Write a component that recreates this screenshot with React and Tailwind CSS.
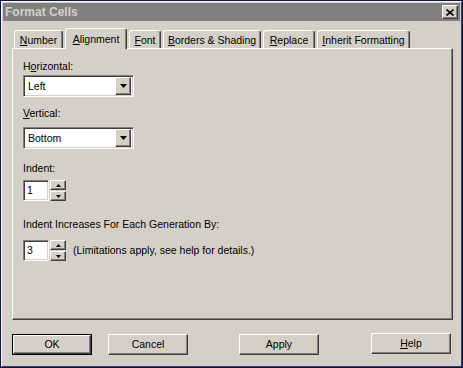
import React from 'react'

const raised = 'border border-t-white border-l-white border-r-[#404040] border-b-[#404040] shadow-[inset_-1px_-1px_#808080] bg-[#d4d0c8]'
const sunken = 'border border-t-[#808080] border-l-[#808080] border-r-white border-b-white shadow-[inset_1px_1px_#404040,inset_-1px_-1px_#d4d0c8] bg-white'

function U({ children }) {
  return <span className="underline underline-offset-[1px]">{children}</span>
}

function Tab({ w, selected, children }) {
  return (
    <div
      className={
        'flex items-start justify-center rounded-t-[3px] border-t border-l border-r border-t-white border-l-white border-r-[#404040] shadow-[inset_-1px_0_#808080] bg-[#d4d0c8] ' +
        (selected ? 'relative z-10 -mb-px h-[21px] pt-[4px]' : 'h-[18px] pt-[3px]')
      }
      style={{ width: w }}
    >
      {children}
    </div>
  )
}

function Combo({ value }) {
  return (
    <div className={'flex h-[22px] w-[111px] items-center p-[2px] ' + sunken}>
      <span className="flex-1 pl-[2px]">{value}</span>
      <div className={'flex h-[18px] w-[16px] items-center justify-center ' + raised}>
        <svg width="7" height="4" viewBox="0 0 7 4">
          <path d="M0 0h7L3.5 4z" fill="#000" />
        </svg>
      </div>
    </div>
  )
}

function Spin({ value }) {
  return (
    <div className="flex h-[21px] items-stretch">
      <div className={'flex w-[26px] items-center pl-[3px] ' + sunken}>{value}</div>
      <div className="ml-px flex w-[16px] flex-col">
        <div className={'flex h-[10px] items-center justify-center ' + raised}>
          <svg width="5" height="3" viewBox="0 0 5 3">
            <path d="M2.5 0L5 3H0z" fill="#000" />
          </svg>
        </div>
        <div className={'mt-px flex h-[10px] items-center justify-center ' + raised}>
          <svg width="5" height="3" viewBox="0 0 5 3">
            <path d="M0 0h5L2.5 3z" fill="#000" />
          </svg>
        </div>
      </div>
    </div>
  )
}

function Btn({ children, def, cls }) {
  return (
    <div className={'w-[80px] ' + (def ? 'border border-black ' : '') + cls}>
      <div className={'flex items-center justify-center ' + (def ? 'h-[19px] ' : 'h-[21px] ') + raised}>
        {children}
      </div>
    </div>
  )
}

export default function App() {
  return (
    <div
      className="h-[368px] w-[463px] overflow-hidden border border-[#0c1450] bg-[#d4d0c8] text-[10.5px] leading-[13px] text-black"
      style={{ fontFamily: '"Liberation Sans", Arial, sans-serif' }}
    >
      <div className="h-full border border-t-white border-l-white border-r-[#404040] border-b-[#404040] p-px">
        {/* title bar */}
        <div className="flex h-[18px] items-center bg-[#808080] pl-[2px] pr-[2px]">
          <span className="flex-1 text-[12px] font-bold text-[#d4d0c8]">Format Cells</span>
          <div className={'flex h-[14px] w-[16px] items-center justify-center ' + raised}>
            <svg width="8" height="7" viewBox="0 0 8 7">
              <path d="M0.5 0.5L7.5 6.5M7.5 0.5L0.5 6.5" stroke="#000" strokeWidth="1.6" />
            </svg>
          </div>
        </div>

        {/* tabs */}
        <div className="ml-[9px] mt-[7px] flex items-end pl-[2px]">
          <Tab w={49}><span><U>N</U>umber</span></Tab>
          <div className="w-[2px]" />
          <Tab w={62} selected><span><U>A</U>lignment</span></Tab>
          <div className="w-[2px]" />
          <Tab w={32}><span><U>F</U>ont</span></Tab>
          <div className="w-[2px]" />
          <Tab w={98}><span><U>B</U>orders &amp; Shading</span></Tab>
          <div className="w-[2px]" />
          <Tab w={52}><span><U>R</U>eplace</span></Tab>
          <div className="w-[2px]" />
          <Tab w={93}><span><U>I</U>nherit Formatting</span></Tab>
        </div>

        {/* panel */}
        <div className="ml-[9px] h-[272px] w-[441px] border border-t-white border-l-white border-r-[#404040] border-b-[#404040] shadow-[inset_-1px_-1px_#808080] px-[10px] pt-[11px]">
          <div>H<U>o</U>rizontal:</div>
          <div className="mt-[2px]"><Combo value="Left" /></div>
          <div className="mt-[10px]"><U>V</U>ertical:</div>
          <div className="mt-[7px]"><Combo value="Bottom" /></div>
          <div className="mt-[13px]">Indent:</div>
          <div className="mt-[5px]"><Spin value="1" /></div>
          <div className="mt-[17px]">Indent Increases For Each Generation By:</div>
          <div className="mt-[9px] flex items-center">
            <Spin value="3" />
            <span className="ml-[7px]">(Limitations apply, see help for details.)</span>
          </div>
        </div>

        {/* buttons */}
        <div className="ml-[9px] mt-[13px] flex items-start">
          <Btn def cls="mt-px">OK</Btn>
          <Btn cls="ml-[16px] mt-px">Cancel</Btn>
          <Btn cls="ml-[51px] mt-px">Apply</Btn>
          <Btn cls="ml-[52px]"><span><U>H</U>elp</span></Btn>
        </div>
      </div>
    </div>
  )
}
